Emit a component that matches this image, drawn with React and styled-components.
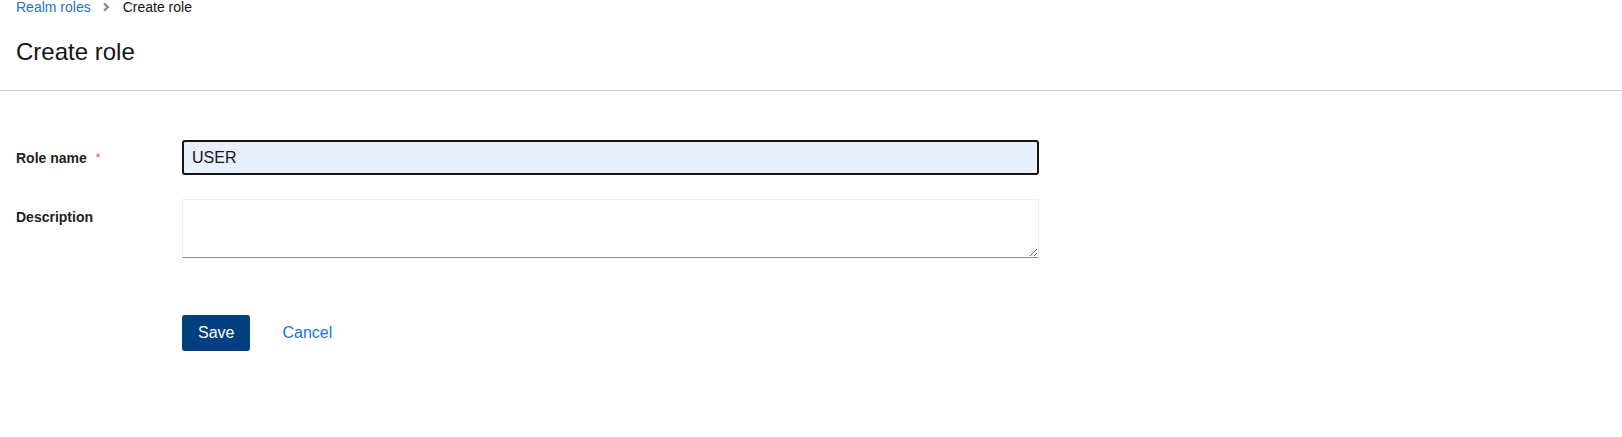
import React, { useState } from 'react';
import styled, { createGlobalStyle } from 'styled-components';

const GlobalStyle = createGlobalStyle`
  html, body {
    margin: 0;
    padding: 0;
    background: #fff;
    font-family: "Liberation Sans", Arial, sans-serif;
    color: #151515;
  }
`;

const Header = styled.section`
  padding: 0 16px 22px;
  border-bottom: 1px solid #d2d2d2;
`;

const Breadcrumb = styled.nav`
  display: flex;
  align-items: center;
  gap: 12px;
  font-size: 14px;
  line-height: 14px;
  height: 14px;
`;

const Crumb = styled.a`
  color: ${({ active }) => (active ? '#151515' : '#2473cf')};
  text-decoration: none;
`;

const Chevron = styled.svg`
  width: 8px;
  height: 10px;
  fill: #8a8d90;
`;

const Title = styled.h1`
  margin: 22px 0 0;
  font-size: 24px;
  font-weight: 400;
  line-height: 32px;
`;

const Form = styled.form`
  display: grid;
  grid-template-columns: 150px 857px;
  column-gap: 16px;
  row-gap: 24px;
  padding: 49px 16px 0;
`;

const Label = styled.label`
  font-size: 14px;
  font-weight: 700;
  color: #1f1f1f;
  padding-top: ${({ top }) => top}px;
  line-height: 20px;
`;

const Required = styled.span`
  color: #d9534f;
  font-size: 12px;
  font-weight: 400;
  margin-left: 9px;
  vertical-align: top;
`;

const TextInput = styled.input`
  box-sizing: border-box;
  height: 35px;
  width: 100%;
  padding: 4px 8px;
  border: 2px solid #151515;
  border-radius: 3px;
  background: #e8f0fe;
  font-family: inherit;
  font-size: 16px;
  color: #151515;
  outline: none;
`;

const TextArea = styled.textarea`
  box-sizing: border-box;
  height: 59px;
  width: 100%;
  border: 1px solid #f0f0f0;
  border-bottom-color: #8a8d90;
  background: #fff;
  font-family: inherit;
  font-size: 16px;
  outline: none;
  resize: vertical;
`;

const Actions = styled.div`
  grid-column: 2;
  display: flex;
  align-items: center;
  margin-top: 33px;
`;

const Button = styled.button`
  height: 36px;
  padding: 0 16px;
  border: none;
  border-radius: 3px;
  font-family: inherit;
  font-size: 16px;
  cursor: pointer;
  background: ${({ variant }) => (variant === 'link' ? 'transparent' : '#004080')};
  color: ${({ variant }) => (variant === 'link' ? '#2473cf' : '#fff')};
  margin-left: ${({ variant }) => (variant === 'link' ? '16px' : '0')};
`;

export default function App() {
  const [name, setName] = useState('USER');
  return (
    <>
      <GlobalStyle />
      <Header>
        <Breadcrumb>
          <Crumb href="#">Realm roles</Crumb>
          <Chevron viewBox="0 0 8 10">
            <path d="M2 0.5 L6.5 5 L2 9.5 L0.3 7.8 L3.1 5 L0.3 2.2 Z" />
          </Chevron>
          <Crumb active>Create role</Crumb>
        </Breadcrumb>
        <Title>Create role</Title>
      </Header>
      <Form onSubmit={(e) => e.preventDefault()}>
        <Label top={8}>
          Role name<Required>*</Required>
        </Label>
        <TextInput value={name} onChange={(e) => setName(e.target.value)} />
        <Label top={8}>Description</Label>
        <TextArea />
        <Actions>
          <Button type="submit">Save</Button>
          <Button type="button" variant="link">Cancel</Button>
        </Actions>
      </Form>
    </>
  );
}
